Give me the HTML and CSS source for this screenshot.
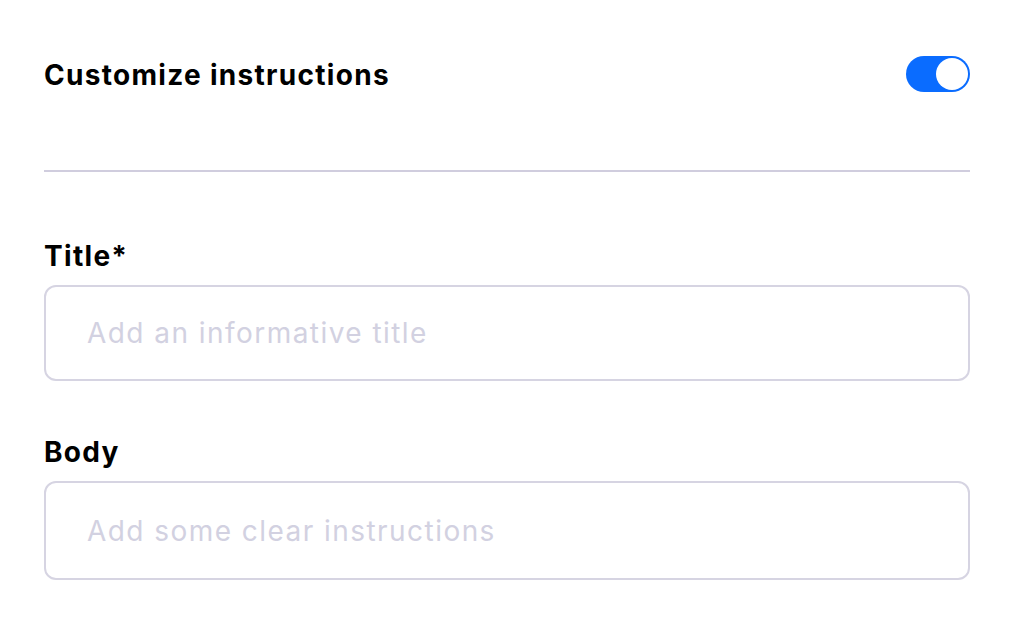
FILE: index.html
```html
<!DOCTYPE html>
<html lang="en">
<head>
<meta charset="utf-8">
<title>Customize instructions</title>
<link rel="stylesheet" href="styles.css">
</head>
<body>
<div class="panel">
  <div class="header">
    <h2 class="heading">Customize instructions</h2>
    <div class="toggle" role="switch" aria-checked="true"><span class="knob"></span></div>
  </div>
  <hr class="divider">
  <div class="fields">
    <div class="field">
      <label class="label">Title*</label>
      <div class="input input-title"><span class="placeholder">Add an informative title</span></div>
    </div>
    <div class="field">
      <label class="label">Body</label>
      <div class="input input-body"><span class="placeholder">Add some clear instructions</span></div>
    </div>
  </div>
</div>
</body>
</html>
```

FILE: styles.css
```css
html, body {
  margin: 0;
  padding: 0;
  background: #ffffff;
}
body {
  font-family: Inter, "Noto Sans", "Liberation Sans", sans-serif;
  color: #000;
}
.panel {
  padding: 56px 44px 0 44px;
  display: flex;
  flex-direction: column;
}
.header {
  display: flex;
  align-items: center;
  justify-content: space-between;
  height: 36px;
}
.heading {
  margin: 0;
  padding-top: 2px;
  font-size: 28px;
  font-weight: 700;
  line-height: 34px;
  letter-spacing: 1.3px;
}
.toggle {
  width: 64px;
  height: 36px;
  border-radius: 18px;
  background: #0a6cff;
  box-sizing: border-box;
  padding: 2px;
  display: flex;
  justify-content: flex-end;
  align-items: center;
}
.knob {
  width: 32px;
  height: 32px;
  border-radius: 50%;
  background: #fff;
}
.divider {
  margin: 78px 0 0 0;
  border: 0;
  height: 2px;
  background: #d0cdde;
}
.fields {
  margin-top: 67px;
  display: flex;
  flex-direction: column;
  gap: 54px;
}
.field {
  display: flex;
  flex-direction: column;
  gap: 12px;
}
.label {
  font-size: 28px;
  font-weight: 700;
  line-height: 34px;
  letter-spacing: 1.3px;
}
.input {
  box-sizing: border-box;
  border: 2px solid #d6d4e2;
  border-radius: 12px;
  display: flex;
  align-items: center;
  padding-left: 41px;
}
.input-title {
  height: 96px;
}
.input-body {
  height: 99px;
}
.placeholder {
  font-size: 28px;
  color: #d2d1e1;
  font-weight: 400;
  letter-spacing: 1.45px;
}
```
